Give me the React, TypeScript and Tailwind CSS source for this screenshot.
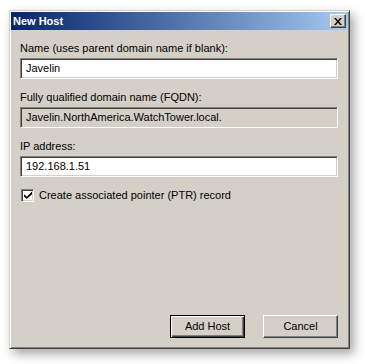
import React from "react";

const font = "font-['Liberation_Sans',Arial,sans-serif]";

function Field({ label, value, readOnly }: { label: string; value: string; readOnly?: boolean }) {
  return (
    <div className="flex flex-col gap-[3px]">
      <span className="text-[11px] leading-[13px] text-black">{label}</span>
      <div
        className={`h-[21px] flex items-center pl-[5px] border border-t-[#808080] border-l-[#808080] border-r-white border-b-white shadow-[inset_1px_1px_#404040,inset_-1px_-1px_#d4d0c8] text-[11px] text-black ${
          readOnly ? "bg-[#d4d0c8]" : "bg-white"
        }`}
      >
        {value}
      </div>
    </div>
  );
}

function Button({ children, isDefault }: { children: React.ReactNode; isDefault?: boolean }) {
  return (
    <button
      className={`w-[75px] h-[23px] bg-[#d4d0c8] text-[11px] text-black flex items-center justify-center ${
        isDefault
          ? "border border-black shadow-[inset_1px_1px_#fff,inset_-1px_-1px_#404040,inset_-2px_-2px_#808080]"
          : "border border-t-white border-l-white border-r-[#404040] border-b-[#404040] shadow-[inset_-1px_-1px_#808080]"
      }`}
    >
      {children}
    </button>
  );
}

export default function App() {
  return (
    <div className={`w-[365px] h-[364px] bg-white pt-[10px] pl-[9px] ${font}`}>
      <div className="w-[341px] h-[339px] flex flex-col p-[1px] bg-[#d4d0c8] border border-t-[#d4d0c8] border-l-[#d4d0c8] border-r-[#404040] border-b-[#404040] shadow-[inset_1px_1px_#fff,inset_-1px_-1px_#808080,4px_5px_10px_rgba(0,0,0,0.35)]">
        {/* title bar */}
        <div className="h-[18px] flex items-center justify-between pl-[2px] pr-[2px] bg-gradient-to-r from-[#0a246a] to-[#a6caf0]">
          <span className="text-[11px] font-bold text-white">New Host</span>
          <div className="w-[16px] h-[14px] bg-[#d4d0c8] flex items-center justify-center border border-t-white border-l-white border-r-[#404040] border-b-[#404040] shadow-[inset_-1px_-1px_#808080]">
            <svg width="8" height="7" viewBox="0 0 8 7">
              <path d="M0 0h2l2 2.5L6 0h2L5 3.5 8 7H6L4 4.5 2 7H0l3-3.5z" fill="black" />
            </svg>
          </div>
        </div>

        {/* body */}
        <div className="flex-1 flex flex-col pl-[9px] pr-[10px] pt-[12px] pb-[9px]">
          <div className="flex flex-col gap-[12px]">
            <Field label="Name (uses parent domain name if blank):" value="Javelin" />
            <Field
              label="Fully qualified domain name (FQDN):"
              value="Javelin.NorthAmerica.WatchTower.local."
              readOnly
            />
            <Field label="IP address:" value="192.168.1.51" />
          </div>

          <div className="flex items-center gap-[5px] mt-[10px] pl-[1px]">
            <div className="w-[13px] h-[13px] bg-white flex items-center justify-center border border-t-[#808080] border-l-[#808080] border-r-white border-b-white shadow-[inset_1px_1px_#404040,inset_-1px_-1px_#d4d0c8]">
              <svg width="8" height="8" viewBox="0 0 8 8">
                <path d="M0 3.2l2.8 2.6L8 0.6v2.6L2.8 8 0 5.6z" fill="black" />
              </svg>
            </div>
            <span className="text-[11px] text-black">Create associated pointer (PTR) record</span>
          </div>

          <div className="mt-auto flex justify-end gap-[18px]">
            <Button isDefault>Add Host</Button>
            <Button>Cancel</Button>
          </div>
        </div>
      </div>
    </div>
  );
}
